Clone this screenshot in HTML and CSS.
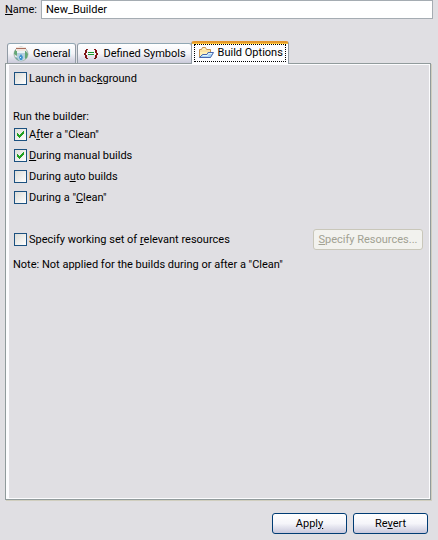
FILE: index.html
```html
<!DOCTYPE html>
<html lang="en">
<head>
<meta charset="utf-8">
<title>Builder Properties</title>
<link rel="stylesheet" href="styles.css">
</head>
<body>
<form class="dialog">
  <div class="name-row">
    <label for="name"><u>N</u>ame:</label>
    <input class="name-input" id="name" type="text" value="New_Builder">
  </div>

  <div class="tabs" role="tablist">
    <button class="tab" type="button" role="tab" aria-selected="false">
      <svg class="icon" viewBox="0 0 16 16" aria-hidden="true">
        <circle cx="8" cy="8" r="7" fill="#dfe6e6" stroke="#a9b5b0"/>
        <path d="M1 8Q1 4 4 3l1 4-1 3zM12 4l3 4-1 4-2 1z" fill="#65a775"/>
        <path d="M2 11l3 1 1 3-3-2z" fill="#72a8a0"/>
        <path d="M3 1h10v4H3z" fill="#f2e6df"/>
        <path d="M3 2h10v1H3z" fill="#a96f5e"/>
        <path d="M4 5h8v7l-3 3H7l-3-3z" fill="#b4cfdf"/>
        <path d="M4 5h8v2H4z" fill="#e9f2f5"/>
        <path d="M8 8l2 3-1 3H7l-1-3z" fill="#3f92cf"/>
        <path d="M7 11h1v1H7z" fill="#d4f2ff"/>
      </svg>
      <span>General</span>
    </button>
    <button class="tab" type="button" role="tab" aria-selected="false">
      <svg class="icon" viewBox="0 0 16 16" aria-hidden="true" shape-rendering="crispEdges">
        <path d="M3 3h2v1H4v3H3v2h1v3h1v1H3v-1H2V9H1V7h1V4h1zM13 3h-2v1h1v3h1v2h-1v3h-1v1h2v-1h1V9h1V7h-1V4h-1z" fill="#7f1515"/>
        <path d="M5 6h6v1H5zM5 8h6v1H5z" fill="#159a2d"/>
      </svg>
      <span>Defined Symbols</span>
    </button>
    <button class="tab active" type="button" role="tab" aria-selected="true">
      <svg class="icon" viewBox="0 0 16 16" aria-hidden="true">
        <path d="M1.500 12.500v-8h2l1-2h3l1 2h4v8" fill="#fff0b5" stroke="#c69352"/>
        <path d="M2 5h10v2H2z" fill="#fbe2a4"/>
        <path d="M1.500 12.500l3-3H9l1-2h5.500l-3 5z" fill="#a9d5f5" stroke="#4767b0"/>
        <path d="M5 10.500h4.500l1-2H14" fill="none" stroke="#e5f5ff"/>
      </svg>
      <span>Build Options</span>
    </button>
  </div>

  <main class="panel" role="tabpanel">
    <label class="check"><input type="checkbox"><span>Launch in bac<u>k</u>ground</span></label>
    <fieldset class="run-group">
      <legend>Run the builder:</legend>
      <label class="check"><input type="checkbox" checked><span>A<u>f</u>ter a "Clean"</span></label>
      <label class="check"><input type="checkbox" checked><span><u>D</u>uring manual builds</span></label>
      <label class="check"><input type="checkbox"><span>During a<u>u</u>to builds</span></label>
      <label class="check"><input type="checkbox"><span>During a "<u>C</u>lean"</span></label>
    </fieldset>
    <div class="resources">
      <label class="check"><input type="checkbox"><span>Specify working set of <u>r</u>elevant resources</span></label>
      <button class="button wide" type="button" disabled><span><u>S</u>pecify Resources...</span></button>
    </div>
    <p class="note">Note: Not applied for the builds during or after a "Clean"</p>
  </main>

  <div class="actions">
    <button class="button" type="button"><span>Appl<u>y</u></span></button>
    <button class="button" type="button"><span>Re<u>v</u>ert</span></button>
  </div>
</form>
</body>
</html>
```
FILE: styles.css
```css
* {
  box-sizing: border-box;
}

body {
  margin: 0;
  background: #e0dfe3;
  color: #000;
  font: 11px/14px Roboto, "Noto Sans", sans-serif;
}

button,
input {
  margin: 0;
  color: inherit;
  font: inherit;
}

u {
  text-underline-offset: 1px;
}

.dialog {
  display: flex;
  flex-direction: column;
  min-height: 100vh;
  padding: 0 7px 6px 5px;
}

.name-row {
  display: flex;
  align-items: center;
  gap: 4px;
  margin-right: -2px;
}

.name-row label {
  white-space: nowrap;
}

.name-input {
  flex: 1;
  min-width: 0;
  height: 19px;
  padding: 0 4px;
  border: 1px solid #a5acb2;
  border-radius: 0;
  background: #fff;
}

.tabs {
  display: flex;
  align-items: flex-end;
  margin-top: 22px;
  padding-left: 2px;
}

.tab {
  display: flex;
  align-items: center;
  gap: 4px;
  height: 20px;
  margin-right: 1px;
  padding: 1px 5px 0 5px;
  border: 1px solid #919ba5;
  border-top-color: #91a7b4;
  border-bottom: 0;
  border-radius: 3px 3px 0 0;
  background: linear-gradient(#fff, #f4f4f8 50%, #cacada);
  white-space: nowrap;
}

.tab.active {
  position: relative;
  height: 23px;
  margin: 0 0 -1px -2px;
  padding: 0 5px 2px 6px;
  border-top: 2px solid #e5972d;
  background: linear-gradient(#ffc73c 1px, #fcfcfe 1px);
}

.tab.active::after {
  position: absolute;
  inset: 1px 2px 2px 2px;
  border: 1px dotted #000;
  content: "";
}

.icon {
  flex: none;
  width: 16px;
  height: 16px;
}

.panel {
  flex: 1;
  padding: 6px 7px 6px 5px;
  border: 1px solid #919b9c;
  box-shadow: inset 3px 0 #fcfcfe, inset -1px 0 #fcfcfe, inset 0 1px #fcfcfe, inset 0 -1px #fcfcfe, 1px 1px #d0cebf;
}

.check {
  display: flex;
  align-items: center;
  gap: 2px;
  width: max-content;
  height: 17px;
  padding-left: 3px;
}

.check input {
  flex: none;
  width: 13px;
  height: 13px;
  appearance: none;
  border: 1px solid #1c5180;
  background: linear-gradient(135deg, #dcdcd7, #fff);
}

.check input:checked {
  background:
    conic-gradient(#21a121 0 0) 2px 4px / 1px 3px no-repeat,
    conic-gradient(#21a121 0 0) 3px 5px / 1px 3px no-repeat,
    conic-gradient(#21a121 0 0) 4px 6px / 1px 3px no-repeat,
    conic-gradient(#21a121 0 0) 5px 5px / 1px 3px no-repeat,
    conic-gradient(#21a121 0 0) 6px 4px / 1px 3px no-repeat,
    conic-gradient(#21a121 0 0) 7px 3px / 1px 3px no-repeat,
    conic-gradient(#21a121 0 0) 8px 2px / 1px 3px no-repeat,
    linear-gradient(135deg, #dcdcd7, #fff);
}

.run-group {
  display: grid;
  gap: 4px;
  margin: 23px 0 0;
  padding: 0;
  border: 0;
}

.run-group legend {
  margin-bottom: 2px;
  padding: 0 0 0 2px;
}

.resources {
  display: flex;
  align-items: center;
  justify-content: space-between;
  margin-top: 23px;
}

.button {
  width: 75px;
  height: 21px;
  padding: 0;
  border: 1px solid #003c74;
  border-radius: 3px;
  background: linear-gradient(#fff, #f5f5fa 50%, #c8c8dc);
}

.button.wide {
  width: 110px;
}

.button:disabled {
  border-color: #c9c7ba;
  background: #f2f2ee;
  color: #a1a192;
}

.note {
  margin: 8px 0 0 2px;
}

.actions {
  display: flex;
  justify-content: flex-end;
  gap: 6px;
  margin: 13px 3px 0 0;
}
```
